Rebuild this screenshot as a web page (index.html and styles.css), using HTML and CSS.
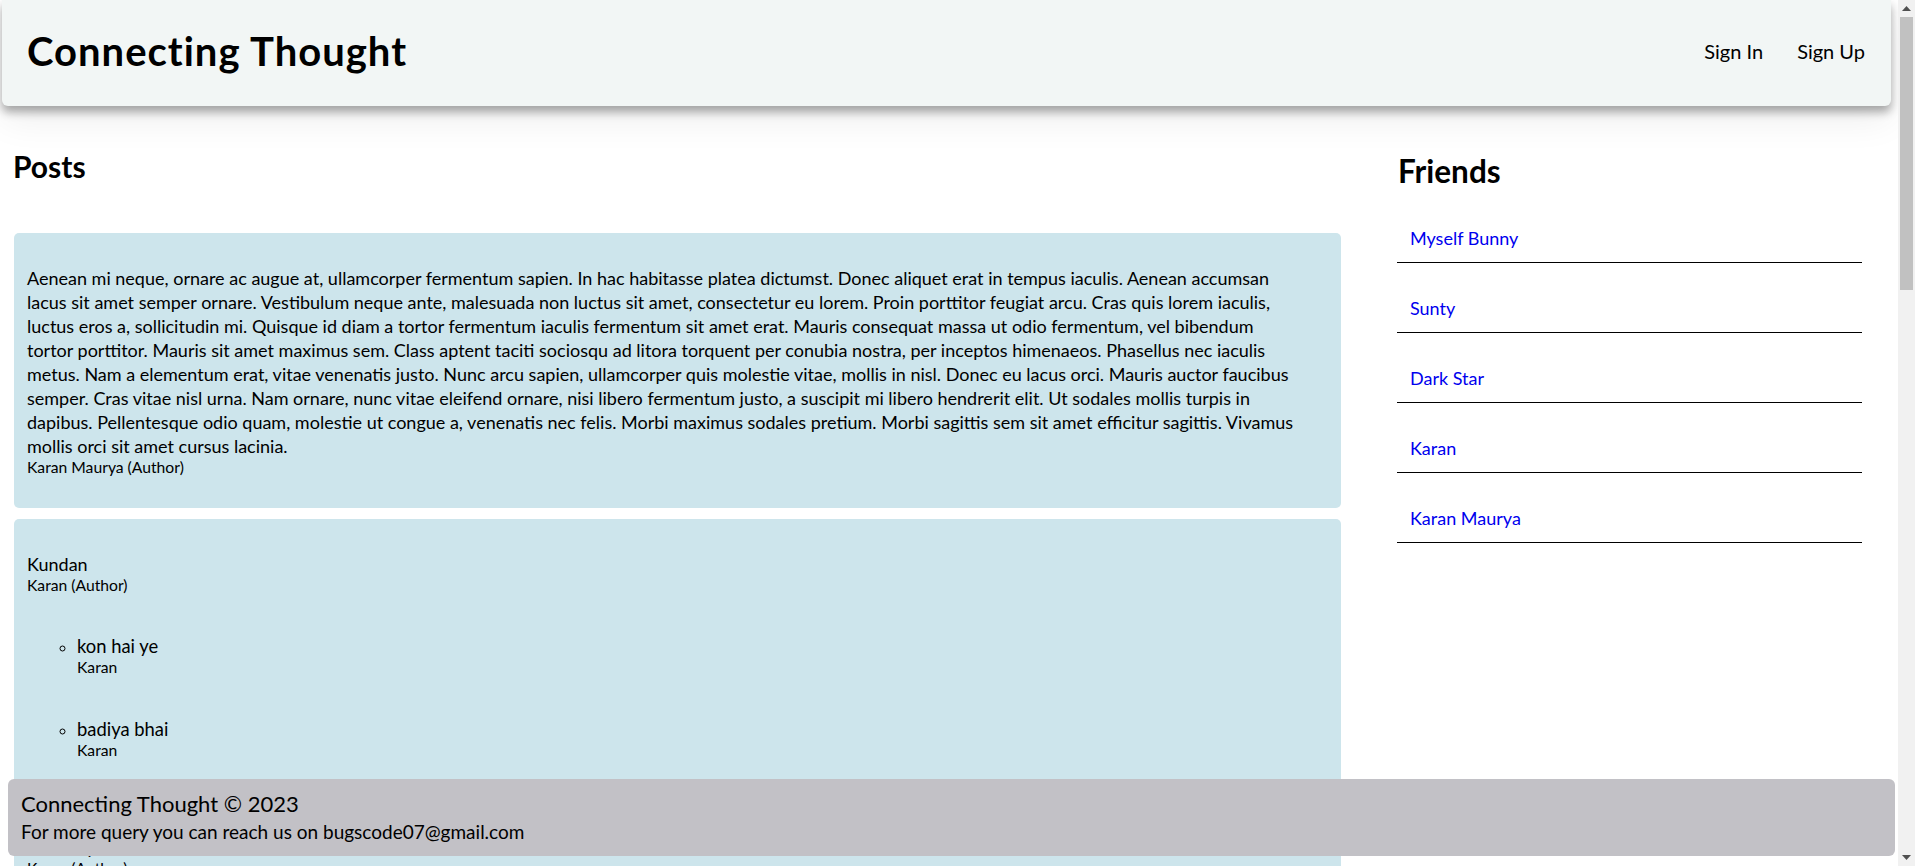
FILE: index.html
```html
<!DOCTYPE html>
<html lang="en">
<head>
<meta charset="utf-8">
<title>Connecting Thought</title>
<link rel="stylesheet" href="styles.css">
</head>
<body>
<header class="navbar">
  <a class="brand" href="#">Connecting Thought</a>
  <nav class="nav-links">
    <a href="#">Sign In</a>
    <a href="#">Sign Up</a>
  </nav>
</header>

<main class="layout">
  <section class="posts">
    <h2 class="posts-title">Posts</h2>
    <div class="post-list">
      <article class="post">
        <p class="post-content">Aenean mi neque, ornare ac augue at, ullamcorper fermentum sapien. In hac habitasse platea dictumst. Donec aliquet erat in tempus iaculis. Aenean accumsan<br>
lacus sit amet semper ornare. Vestibulum neque ante, malesuada non luctus sit amet, consectetur eu lorem. Proin porttitor feugiat arcu. Cras quis lorem iaculis,<br>
luctus eros a, sollicitudin mi. Quisque id diam a tortor fermentum iaculis fermentum sit amet erat. Mauris consequat massa ut odio fermentum, vel bibendum<br>
tortor porttitor. Mauris sit amet maximus sem. Class aptent taciti sociosqu ad litora torquent per conubia nostra, per inceptos himenaeos. Phasellus nec iaculis<br>
metus. Nam a elementum erat, vitae venenatis justo. Nunc arcu sapien, ullamcorper quis molestie vitae, mollis in nisl. Donec eu lacus orci. Mauris auctor faucibus<br>
semper. Cras vitae nisl urna. Nam ornare, nunc vitae eleifend ornare, nisi libero fermentum justo, a suscipit mi libero hendrerit elit. Ut sodales mollis turpis in<br>
dapibus. Pellentesque odio quam, molestie ut congue a, venenatis nec felis. Morbi maximus sodales pretium. Morbi sagittis sem sit amet efficitur sagittis. Vivamus<br>
mollis orci sit amet cursus lacinia.</p>
        <small class="post-author">Karan Maurya (Author)</small>
      </article>

      <article class="post">
        <p class="post-content">Kundan</p>
        <small class="post-author">Karan (Author)</small>
        <ul class="comments">
          <li class="comment">
            <p class="comment-text">kon hai ye</p>
            <small class="comment-author">Karan</small>
          </li>
          <li class="comment">
            <p class="comment-text">badiya bhai</p>
            <small class="comment-author">Karan</small>
          </li>
        </ul>
      </article>

      <article class="post">
        <p class="post-content">Nice day</p>
        <small class="post-author">Karan (Author)</small>
        <ul class="comments">
          <li class="comment">
            <p class="comment-text">mast hai</p>
            <small class="comment-author">Sunty</small>
          </li>
        </ul>
      </article>

      <article class="post">
        <p class="post-content">Hello everyone</p>
        <small class="post-author">Dark Star (Author)</small>
        <ul class="comments">
          <li class="comment">
            <p class="comment-text">hello</p>
            <small class="comment-author">Karan Maurya</small>
          </li>
          <li class="comment">
            <p class="comment-text">kaise ho sab</p>
            <small class="comment-author">Myself Bunny</small>
          </li>
        </ul>
      </article>

      <article class="post">
        <p class="post-content">Aenean mi neque, ornare ac augue at, ullamcorper fermentum sapien. In hac habitasse platea dictumst. Donec aliquet erat in tempus iaculis. Aenean accumsan lacus sit amet semper ornare. Vestibulum neque ante, malesuada non luctus sit amet, consectetur eu lorem. Proin porttitor feugiat arcu. Cras quis lorem iaculis, luctus eros a, sollicitudin mi.</p>
        <small class="post-author">Myself Bunny (Author)</small>
      </article>

      <article class="post">
        <p class="post-content">Good night</p>
        <small class="post-author">Sunty (Author)</small>
        <ul class="comments">
          <li class="comment">
            <p class="comment-text">gn</p>
            <small class="comment-author">Karan</small>
          </li>
        </ul>
      </article>
    </div>
  </section>

  <aside class="friends">
    <h2 class="friends-title">Friends</h2>
    <ul class="friend-list">
      <li class="friend"><a href="#">Myself Bunny</a></li>
      <li class="friend"><a href="#">Sunty</a></li>
      <li class="friend"><a href="#">Dark Star</a></li>
      <li class="friend"><a href="#">Karan</a></li>
      <li class="friend"><a href="#">Karan Maurya</a></li>
    </ul>
  </aside>
</main>

<footer class="site-footer">
  <div class="footer-title">Connecting Thought &copy; 2023</div>
  <div class="footer-note">For more query you can reach us on bugscode07@gmail.com</div>
</footer>

<div class="scrollbar" aria-hidden="true">
  <span class="scroll-arrow">
    <svg width="9" height="5" viewBox="0 0 9 5"><path d="M0 5 L4.5 0 L9 5 Z" fill="#505050"/></svg>
  </span>
  <span class="scroll-track"><span class="scroll-thumb"></span></span>
  <span class="scroll-arrow">
    <svg width="9" height="5" viewBox="0 0 9 5"><path d="M0 0 L4.5 5 L9 0 Z" fill="#505050"/></svg>
  </span>
</div>
</body>
</html>
```

FILE: styles.css
```css
body {
  margin: 0 17px 0 0;
  font-family: Lato, "Open Sans", sans-serif;
  color: #000;
  background: #fff;
}

a {
  color: inherit;
  text-decoration: none;
}

/* Header */
.navbar {
  display: flex;
  align-items: center;
  justify-content: space-between;
  height: 106px;
  box-sizing: border-box;
  margin: 0 7px 0 2px;
  padding: 0 26px 4px 25px;
  background: #f2f6f5;
  border-radius: 0 0 6px 6px;
  box-shadow: 0 6px 10px rgba(0, 0, 0, 0.33), 0 14px 36px rgba(0, 0, 0, 0.07);
  position: relative;
  z-index: 1;
}

.brand {
  font-size: 40px;
  font-weight: 700;
  line-height: 46px;
  letter-spacing: 1px;
}

.nav-links {
  display: flex;
  gap: 34px;
}

.nav-links a {
  font-size: 20px;
  line-height: 25px;
}

/* Main layout */
.layout {
  display: grid;
  grid-template-columns: 1fr 465px;
  column-gap: 56px;
  padding: 0 36px 120px 13px;
}

.posts-title {
  margin: 43px 0 50px;
  font-size: 30px;
  line-height: 34px;
  font-weight: 700;
}

.post-list {
  padding-left: 1px;
}

.post {
  background: #cde5ec;
  border-radius: 5px;
  padding: 33px 5px 32px 13px;
  margin-bottom: 11px;
}

.post-content {
  margin: 0;
  font-size: 18px;
  line-height: 24px;
}

.post-author,
.comment-author {
  display: block;
  font-size: 15.7px;
  line-height: 18px;
}

.comments {
  list-style-type: circle;
  margin: 0;
  padding: 0 0 0 50px;
}

.comment {
  padding-top: 40px;
}

.comment + .comment {
  padding-top: 41px;
}

.comment-text {
  margin: 0;
  font-size: 18.4px;
  line-height: 24px;
}

/* Friends */
.friends-title {
  margin: 47px 0 4px;
  font-size: 31.5px;
  line-height: 36px;
  font-weight: 700;
  padding-left: 1px;
}

.friend-list {
  list-style: none;
  margin: 0;
  padding: 0;
}

.friend {
  padding: 34px 13px 13px;
  border-bottom: 1px solid #000;
  font-size: 18px;
  line-height: 22px;
}

.friend a {
  color: #0000ee;
}

/* Footer */
.site-footer {
  position: fixed;
  left: 8px;
  right: 20px;
  bottom: 10px;
  height: 77px;
  box-sizing: border-box;
  padding: 12px 13px;
  background: #c2c1c6;
  border-radius: 6px;
  z-index: 2;
}

.footer-title {
  font-size: 22px;
  line-height: 26px;
  margin-bottom: 3px;
}

.footer-note {
  font-size: 19px;
  line-height: 23px;
}

/* Window scrollbar */
.scrollbar {
  position: fixed;
  top: 0;
  right: 0;
  bottom: 0;
  width: 17px;
  display: flex;
  flex-direction: column;
  background: #f1f1f1;
  z-index: 3;
}

.scroll-arrow {
  display: flex;
  align-items: center;
  justify-content: center;
  height: 17px;
  flex: none;
}

.scroll-track {
  flex: 1;
  padding: 0 2px;
}

.scroll-thumb {
  display: block;
  height: 273px;
  background: #c1c1c1;
}
```
